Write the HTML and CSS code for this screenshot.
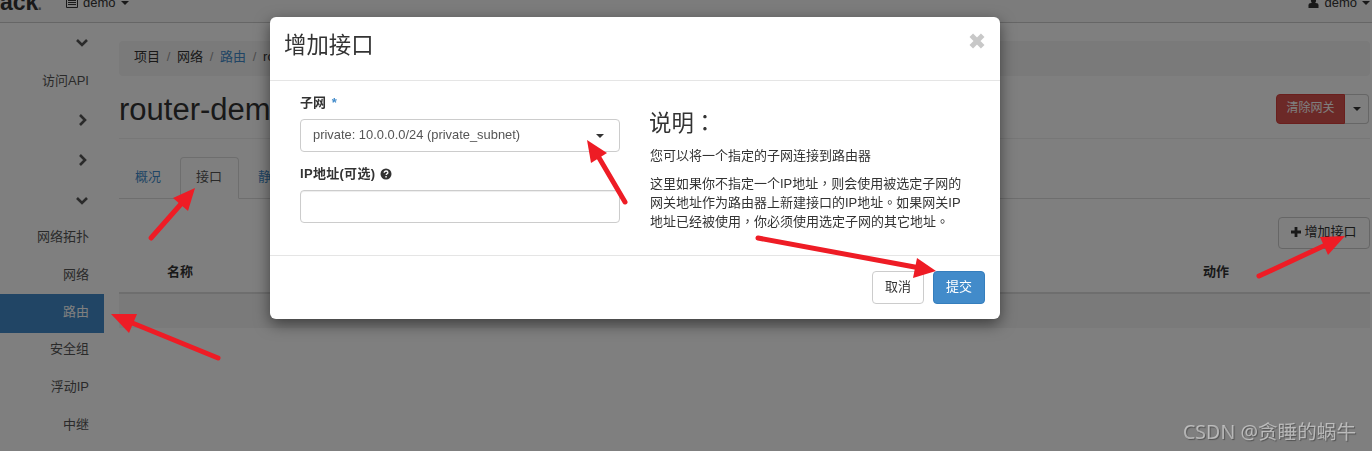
FILE: index.html
```html
<!DOCTYPE html>
<html>
<head>
<meta charset="utf-8">
<title>增加接口</title>
<link rel="stylesheet" href="styles.css">
</head>
<body>
<div class="page">
  <header class="topnav">
    <span class="brand">ack<small>.</small></span>
    <span class="project">
      <svg class="icon-list" viewBox="0 0 12 10"><path d="M0.5 0.5h11v9h-11zM2 2.5h8M2 4.5h8M2 6.5h8" fill="none" stroke="#333" stroke-width="1"/></svg>
      demo <i class="caret"></i>
    </span>
    <span class="user">
      <svg class="icon-user" viewBox="0 0 12 11"><circle cx="6" cy="3" r="2.8" fill="#333"/><path d="M0.5 11V8q0-2.6 3-2.6h5q3 0 3 2.6v3z" fill="#333"/></svg>
      demo <i class="caret"></i>
    </span>
  </header>
  <div class="shell">
    <nav class="sidebar">
      <div class="group"><svg class="chev" viewBox="0 0 14 10"><path d="M2 2l5 5 5-5" /></svg></div>
      <div class="item">访问API</div>
      <div class="group"><svg class="chev side" viewBox="0 0 10 14"><path d="M2 2l5 5-5 5" /></svg></div>
      <div class="group"><svg class="chev side" viewBox="0 0 10 14"><path d="M2 2l5 5-5 5" /></svg></div>
      <div class="group last"><svg class="chev" viewBox="0 0 14 10"><path d="M2 2l5 5 5-5" /></svg></div>
      <div class="item">网络拓扑</div>
      <div class="item">网络</div>
      <div class="item active">路由</div>
      <div class="item">安全组</div>
      <div class="item">浮动IP</div>
      <div class="item">中继</div>
    </nav>
    <main class="content">
      <ol class="breadcrumb">
        <li>项目</li><li class="sep">/</li><li>网络</li><li class="sep">/</li><li class="link">路由</li><li class="sep">/</li><li>router-demo</li>
      </ol>
      <div class="page-title">
        <h1>router-demo</h1>
        <div class="btn-group">
          <button class="btn btn-danger">清除网关</button><button class="btn btn-split"><i class="caret"></i></button>
        </div>
      </div>
      <ul class="tabs">
        <li>概况</li>
        <li class="current">接口</li>
        <li>静态路由</li>
      </ul>
      <div class="toolbar">
        <button class="btn btn-add"><svg class="icon-plus" viewBox="0 0 10 10"><path d="M3.6 0h2.8v3.6H10v2.8H6.4V10H3.6V6.4H0V3.6h3.6z" fill="#333"/></svg>增加接口</button>
      </div>
      <div class="thead"><span>名称</span><span>动作</span></div>
      <div class="tbody"></div>
    </main>
  </div>
</div>
<div class="backdrop"></div>
<section class="modal">
  <div class="modal-header">
    <h2>增加接口</h2>
    <svg class="close" viewBox="0 0 14 14"><path d="M2 2l10 10M12 2L2 12"/></svg>
  </div>
  <div class="modal-body">
    <form class="form">
      <label class="lbl">子网 <em>*</em></label>
      <div class="select"><span>private: 10.0.0.0/24 (private_subnet)</span><i class="caret"></i></div>
      <label class="lbl lbl-ip">IP地址(可选)
        <svg class="icon-help" viewBox="0 0 12 12"><circle cx="6" cy="6" r="5.5" fill="#333"/><path d="M4.2 4.7q0-1.7 1.9-1.7 1.8 0 1.8 1.5 0 .9-1 1.4-.7.4-.7 1.1" fill="none" stroke="#fff" stroke-width="1.3"/><rect x="5.3" y="8.1" width="1.5" height="1.4" fill="#fff"/></svg>
      </label>
      <input class="input" type="text">
    </form>
    <div class="help">
      <h3>说明：</h3>
      <p>您可以将一个指定的子网连接到路由器</p>
      <p>这里如果你不指定一个IP地址，则会使用被选定子网的网关地址作为路由器上新建接口的IP地址。如果网关IP地址已经被使用，你必须使用选定子网的其它地址。</p>
    </div>
  </div>
  <div class="modal-footer">
    <button class="btn btn-cancel">取消</button>
    <button class="btn btn-primary">提交</button>
  </div>
</section>
<svg class="arrows" viewBox="0 0 1372 451">
  <g class="arrow">
    <path d="M151 238L181 204"/><polygon points="195,188 173,198 188,211"/>
    <path d="M218 358L125 320"/><polygon points="111,314 137,314 129,333"/>
    <path d="M625 202L598 156"/><polygon points="587,140 607,153 591,163"/>
    <path d="M758 238L920 268"/><polygon points="936,271 917,258 913,278"/>
    <path d="M1259 276L1330 243"/><polygon points="1345,236 1320,237 1328,255"/>
  </g>
</svg>
<div class="watermark">CSDN @贪睡的蜗牛</div>
</body>
</html>
```
FILE: styles.css
```css
* { box-sizing: border-box; }
html, body { margin: 0; height: 451px; overflow: hidden; }
body {
  width: 1372px;
  background: #fff;
  color: #333;
  font: 13px/1.43 "Liberation Sans", "Noto Sans CJK SC", sans-serif;
}
button, input { font: inherit; }
.page { height: 451px; overflow: hidden; }
.caret {
  display: inline-block;
  width: 0; height: 0;
  border-left: 4px solid transparent;
  border-right: 4px solid transparent;
  border-top: 4px solid currentColor;
  vertical-align: middle;
}

.topnav {
  height: 23px;
  display: flex;
  align-items: flex-end;
  background: #f8f8f8;
  border-bottom: 1px solid #ccc;
  overflow: hidden;
  position: relative;
  padding-bottom: 10px;
}
.brand {
  font-size: 23px;
  font-weight: 700;
  line-height: 23px;
  width: 66px;
  margin-bottom: -2px;
  flex: none;
  color: #333;
}
.brand small { font-size: 23px; font-weight: 400; color: #888; margin-left: -2px; }
.project, .user { display: flex; align-items: center; gap: 5px; line-height: 14px; font-size: 13px; margin-bottom: 2px; }
.user { margin-left: auto; margin-right: 2px; }
.icon-list { width: 12px; height: 10px; }
.icon-user { width: 11px; height: 10px; }

.shell { display: flex; }
.sidebar { width: 104px; flex: none; padding-top: 1px; }
.group {
  height: 40px;
  display: flex;
  align-items: center;
  justify-content: flex-end;
  padding-right: 15px;
}
.group:first-child { height: 38px; }
.group.last { height: 38px; padding-top: 3px; }
.chev { width: 14px; height: 10px; fill: none; stroke: #555; stroke-width: 2.6; }
.chev.side { width: 10px; height: 14px; margin-right: 1px; }
.item {
  height: 38px;
  line-height: 38px;
  text-align: right;
  padding-right: 15px;
  color: #555;
}
.item.active {
  background: #428bca;
  color: #fff;
  height: 39px;
  line-height: 35px;
  margin-bottom: -3px;
  position: relative;
}

.content { flex: 1; padding: 18px 2px 0 15px; min-width: 0; }
.breadcrumb {
  list-style: none;
  margin: 0;
  height: 35px;
  padding: 0 15px 2px;
  display: flex;
  align-items: center;
  gap: 6px;
  background: #f5f5f5;
  border-radius: 4px;
}
.breadcrumb .sep { color: #999; margin: 0 .7px; }
.breadcrumb .link { color: #428bca; }
.page-title {
  height: 63px;
  border-bottom: 1px solid #eee;
  display: flex;
  align-items: flex-start;
  justify-content: space-between;
}
.page-title h1 {
  margin: 15px 0 0;
  font-size: 31px;
  font-weight: 400;
  line-height: 38px;
}
.btn-group { display: flex; margin: 18px 1px 0 0; }
.btn {
  border: 1px solid #ccc;
  background: #fff;
  color: #333;
  border-radius: 4px;
  cursor: pointer;
  padding: 0;
}
.btn-danger {
  width: 69px; height: 30px;
  background: #d9534f;
  border-color: #d43f3a;
  color: #fff;
  border-radius: 4px 0 0 4px;
  font-size: 12px;
}
.btn-split {
  width: 24px; height: 30px;
  border-left: 0;
  border-radius: 0 4px 4px 0;
}
.tabs {
  list-style: none;
  margin: 18px 0 0;
  padding: 0;
  height: 42px;
  display: flex;
  gap: 3px;
  border-bottom: 1px solid #ddd;
  color: #428bca;
}
.tabs li { height: 42px; padding: 0 15px; line-height: 38px; border: 1px solid transparent; }
.tabs .current {
  width: 59px;
  color: #555;
  background: #fff;
  border-color: #ddd #ddd #fff;
  border-radius: 4px 4px 0 0;
}
.toolbar { display: flex; justify-content: flex-end; margin-top: 18px; }
.btn-add {
  width: 92px; height: 32px;
  padding-bottom: 2px;
  display: flex; align-items: center; justify-content: center; gap: 3px;
}
.icon-plus { width: 10px; height: 10px; }
.thead {
  display: flex;
  justify-content: space-between;
  height: 45px;
  padding: 14px 141px 0 48px;
  font-weight: 700;
  line-height: 18px;
  border-bottom: 2px solid #ddd;
  color: #333;
}
.tbody { height: 34px; background: #f5f5f5; }

.backdrop { position: fixed; inset: 0; background: rgba(0,0,0,.5); }

.modal {
  position: absolute;
  left: 270px; top: 17px;
  width: 730px; height: 302px;
  background: #fff;
  border-radius: 6px;
  box-shadow: 0 5px 15px rgba(0,0,0,.5);
  display: flex;
  flex-direction: column;
}
.modal-header {
  height: 64px;
  flex: none;
  border-bottom: 1px solid #e5e5e5;
  display: flex;
  align-items: center;
  justify-content: space-between;
  padding: 0 15px 5px;
}
.modal-header h2 { margin: 0 0 0 -1px; font-size: 22.4px; font-weight: 400; line-height: 30px; }
.close { width: 16px; height: 16px; fill: none; stroke: #c8c8c8; stroke-width: 4.4; margin-bottom: 11px; }
.modal-body {
  height: 174px;
  flex: none;
  display: flex;
  gap: 30px;
  padding: 0 30px;
}
.form { width: 320px; flex: none; padding-top: 13px; }
.lbl { display: block; font-weight: 700; line-height: 18px; font-size: 13px; margin-bottom: 7px; }
.lbl em { color: #428bca; font-style: normal; margin-left: 2px; }
.lbl-ip { margin-top: 13px; margin-bottom: 7px; display: flex; align-items: center; gap: 5px; letter-spacing: .3px; }
.icon-help { width: 12px; height: 12px; }
.select {
  height: 33px;
  border: 1px solid #ccc;
  border-radius: 4px;
  display: flex;
  align-items: center;
  justify-content: space-between;
  padding: 0 15px 0 12px;
  color: #555;
  font-size: 12.9px;
}
.select .caret { color: #333; }
.input {
  display: block;
  width: 320px; height: 33px;
  border: 1px solid #ccc;
  border-radius: 4px;
  box-shadow: inset 0 1px 1px rgba(0,0,0,.075);
  background: #fff;
}
.help { flex: 1; padding-top: 27px; min-width: 0; font-family: "Liberation Sans", "Noto Sans CJK TC", sans-serif; }
.help h3 { margin: 0 0 6px -1px; font-size: 22.4px; font-weight: 400; line-height: 32px; }
.help p { margin: 0 0 9px; line-height: 19px; }
.modal-footer {
  flex: 1;
  border-top: 1px solid #e5e5e5;
  display: flex;
  justify-content: flex-end;
  align-items: flex-start;
  gap: 9px;
  padding: 15px 15px 0;
}
.btn-cancel, .btn-primary { width: 52px; height: 33px; }
.btn-primary { background: #428bca; border-color: #357ebd; color: #fff; }

.arrows { position: absolute; left: 0; top: 0; width: 1372px; height: 451px; pointer-events: none; }
.arrow path { stroke: #ee1c25; stroke-width: 5; stroke-linecap: round; fill: none; }
.arrow polygon { fill: #ee1c25; }
.watermark {
  position: absolute;
  right: 16px; bottom: 6px;
  font: 19.6px/26px "Noto Sans", "Noto Sans CJK SC", sans-serif;
  color: rgba(255,255,255,.5);
  text-shadow: 1px 1px 1px rgba(0,0,0,.35);
}
```
